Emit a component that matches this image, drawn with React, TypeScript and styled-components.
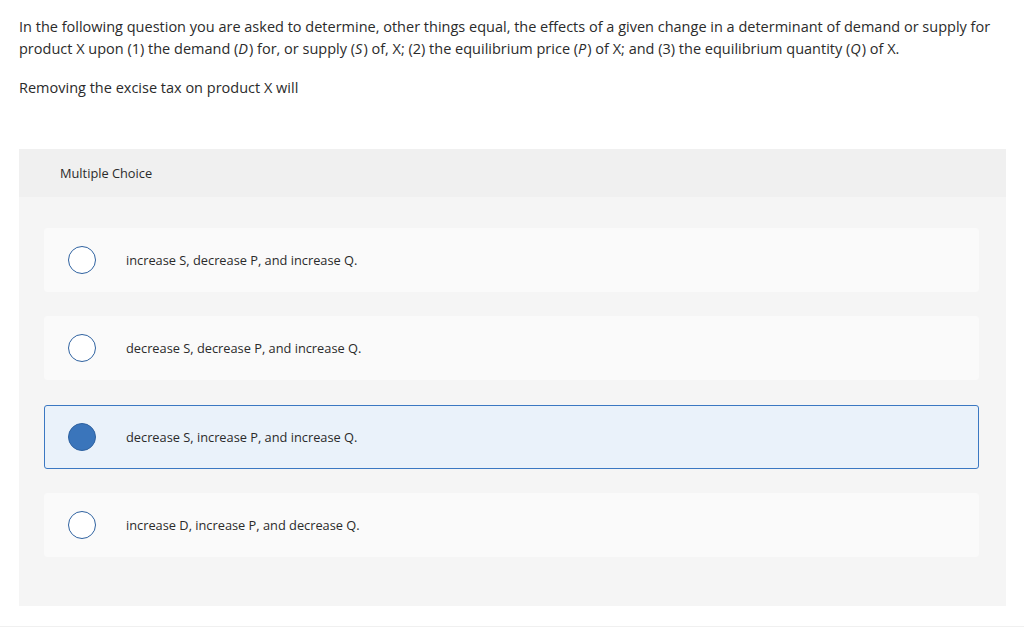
import styled, { createGlobalStyle } from "styled-components";

const GlobalStyle = createGlobalStyle`
  html, body {
    margin: 0;
    padding: 0;
    background: #ffffff;
  }
  body {
    font-family: "Open Sans", "Liberation Sans", sans-serif;
    color: #2b2b2b;
  }
`;

const Page = styled.div`
  width: 1024px;
  height: 627px;
  box-sizing: border-box;
  padding: 16px 18px 0 19px;
  border-bottom: 1px solid #f0f0f0;
`;

const Prompt = styled.p`
  margin: 0;
  font-size: 14.5px;
  line-height: 22px;
  em {
    font-style: italic;
    padding-right: 1px;
  }
`;

const Stem = styled.p`
  margin: 17px 0 0;
  font-size: 14.5px;
  line-height: 22px;
`;

const Panel = styled.div`
  margin-top: 50px;
  width: 987px;
  height: 457px;
  background: #f5f5f5;
  display: flex;
  flex-direction: column;
`;

const PanelHeader = styled.div`
  height: 48px;
  background: #f0f0f0;
  display: flex;
  align-items: center;
  padding-left: 41px;
  font-size: 12.8px;
`;

const Options = styled.div`
  display: flex;
  flex-direction: column;
  gap: 24.4px;
  padding: 31px 27px 0 25px;
`;

const Option = styled.div<{ $selected?: boolean }>`
  height: 64px;
  box-sizing: border-box;
  display: flex;
  align-items: center;
  border-radius: 3px;
  background: ${(p) => (p.$selected ? "#eaf2fa" : "#fafafa")};
  border: 1px solid ${(p) => (p.$selected ? "#3b78c2" : "#fafafa")};
  padding-left: 23px;
`;

const Radio = styled.span<{ $selected?: boolean }>`
  width: 28px;
  height: 28px;
  box-sizing: border-box;
  border-radius: 50%;
  border: 1px solid #2f62a0;
  background: ${(p) => (p.$selected ? "#3a75bb" : "#ffffff")};
  flex-shrink: 0;
`;

const Label = styled.span`
  margin-left: 30px;
  font-size: 12.8px;
  color: #2b2b2b;
`;

const choices = [
  "increase S, decrease P, and increase Q.",
  "decrease S, decrease P, and increase Q.",
  "decrease S, increase P, and increase Q.",
  "increase D, increase P, and decrease Q.",
];

const App = () => {
  const selected = 2;
  return (
    <Page>
      <GlobalStyle />
      <Prompt>
        In the following question you are asked to determine, other things
        equal, the effects of a given change in a determinant of demand or
        supply for product X upon (1) the demand (<em>D</em>) for, or supply (
        <em>S</em>) of, X; (2) the equilibrium price (<em>P</em>) of X; and (3)
        the equilibrium quantity (<em>Q</em>) of X.
      </Prompt>
      <Stem>Removing the excise tax on product X will</Stem>
      <Panel>
        <PanelHeader>Multiple Choice</PanelHeader>
        <Options>
          {choices.map((c, i) => (
            <Option key={c} $selected={i === selected}>
              <Radio $selected={i === selected} />
              <Label>{c}</Label>
            </Option>
          ))}
        </Options>
      </Panel>
    </Page>
  );
};

export default App;
